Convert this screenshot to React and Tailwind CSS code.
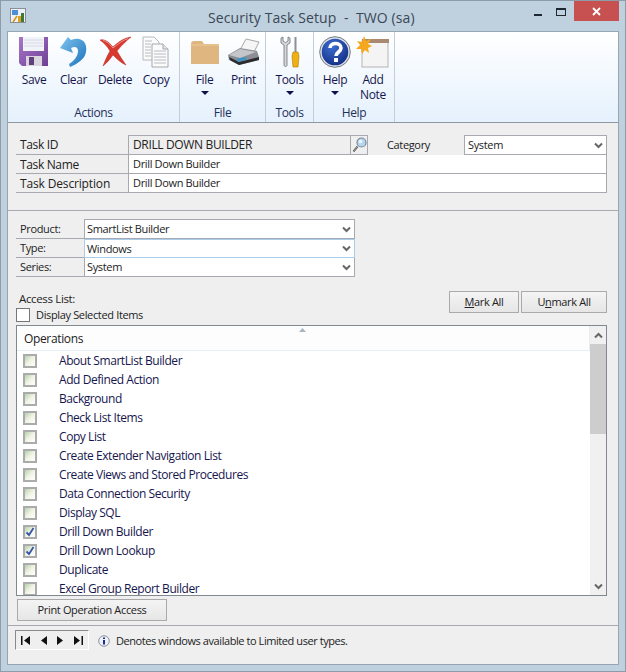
const ops = [
  ['About SmartList Builder', false],
  ['Add Defined Action', false],
  ['Background', false],
  ['Check List Items', false],
  ['Copy List', false],
  ['Create Extender Navigation List', false],
  ['Create Views and Stored Procedures', false],
  ['Data Connection Security', false],
  ['Display SQL', false],
  ['Drill Down Builder', true],
  ['Drill Down Lookup', true],
  ['Duplicate', false],
  ['Excel Group Report Builder', false],
]

const Caret = () => <div className="mx-auto mt-1 h-0 w-0 border-x-[4px] border-t-[4px] border-x-transparent border-t-[#10104a]" />

const Chevron = ({ up }) => (
  <svg width="9" height="7" viewBox="0 0 9 7" className={up ? 'rotate-180' : ''}>
    <path d="M1 1.500 L4.500 5 L8 1.500" fill="none" stroke="#666" strokeWidth="2" />
  </svg>
)

const SaveIcon = () => (
  <svg width="32" height="32" viewBox="0 0 32 32">
    <defs>
      <linearGradient id="sv" x1="0" y1="0" x2="1" y2="1">
        <stop offset="0" stopColor="#a678c8" />
        <stop offset="1" stopColor="#6f3f96" />
      </linearGradient>
    </defs>
    <path d="M1 1h29v29H4l-3-3z" fill="url(#sv)" />
    <rect x="5" y="1" width="21" height="14" fill="#f2f3f8" />
    <path d="M6 4h19M6 7h19M6 10h19" stroke="#d5d8e4" />
    <rect x="8" y="20" width="16" height="10" fill="#d9d6de" />
    <rect x="11" y="21" width="5" height="8" fill="#62407e" />
  </svg>
)

const ClearIcon = () => (
  <svg width="28" height="32" viewBox="0 0 28 32">
    <defs>
      <linearGradient id="cl" x1="0" y1="0" x2="1" y2="1">
        <stop offset="0" stopColor="#7fc4ee" />
        <stop offset="1" stopColor="#1a72bc" />
      </linearGradient>
    </defs>
    <path d="M11 4 C20 0 28 5 26 16 C25 23 17 28 10 31 L9 28 C14 25 18 20 18 15 C18 11 15 10 11 12 L13 17 L0 12 L8 1 Z" fill="url(#cl)" />
  </svg>
)

const DeleteIcon = () => (
  <svg width="32" height="32" viewBox="0 0 32 32">
    <path d="M1 4 C5 3 9 5 14 11 C19 6 25 2 32 1 C27 5 21 11 18 15 C21 20 24 25 27 29 C22 27 18 23 14 19 C11 23 8 27 4 30 C6 25 8 20 11 15 C8 10 5 7 1 4Z" fill="#d8392f" stroke="#b5271f" strokeWidth="0.5" />
    <path d="M4 4.500 C8 5 11 9 14 12 C19 8 24 4 29 2.500" fill="none" stroke="#f0908a" strokeWidth="1" />
  </svg>
)

const CopyIcon = () => (
  <svg width="28" height="32" viewBox="0 0 28 32">
    <path d="M1 1h11l5 5v18H1z" fill="#fbfbfb" stroke="#b4b8bc" />
    <path d="M10 8h11l5 5v18H10z" fill="#fbfbfb" stroke="#a4a8ac" />
    <path d="M3 5h7M3 8h6M3 11h6M3 14h6M3 17h6M3 20h6M12 15h12M12 18h12M12 21h12M12 24h12M12 27h12" stroke="#b8bcc2" />
    <path d="M21 8v5h5" fill="#e4e6e8" stroke="#a4a8ac" />
  </svg>
)

const FolderIcon = () => (
  <svg width="30" height="30" viewBox="0 0 30 30">
    <path d="M1 7c0-2 1-3 3-3h8l2 3h14c1 0 1 1 1 1v19H1z" fill="#dfb67f" />
    <path d="M1 8h28" stroke="#eccb9c" />
  </svg>
)

const PrintIcon = () => (
  <svg width="34" height="30" viewBox="0 0 34 30">
    <path d="M13 13 L19 2 L32 5 L27 15z" fill="#f6f6f6" stroke="#a8a8a8" />
    <path d="M1 18 L13 11 L30 14 L32 20 L32 23 L12 28 L2 23z" fill="#8b8e92" />
    <path d="M2 18 L13 12 L29 15 L13 21z" fill="#c4c6ca" />
    <path d="M3 23 L12 28 L32 23 L32 20 L12 25 L2 20z" fill="#2a2b2e" />
    <rect x="10" y="21" width="9" height="3" fill="#3b93c9" transform="rotate(-12 14 22)" />
  </svg>
)

const ToolsIcon = () => (
  <svg width="22" height="32" viewBox="0 0 22 32">
    <path d="M2 2 L2 7 L5 9 L5 29 C5 31 8 31 8 29 L8 9 L11 7 L11 2 L9 1 L9 5 L6.500 6.500 L4 5 L4 1z" fill="#d4d6d8" stroke="#6e7276" strokeWidth="0.8" />
    <rect x="15.500" y="1" width="2" height="15" fill="#8c9094" />
    <path d="M14 16h5l1 4-1 11h-5l-1-11z" fill="#f0b010" stroke="#a8780a" strokeWidth="0.6" />
  </svg>
)

const HelpIcon = () => (
  <svg width="32" height="32" viewBox="0 0 32 32">
    <defs>
      <radialGradient id="hp" cx="0.4" cy="0.3" r="0.8">
        <stop offset="0" stopColor="#3f6ed0" />
        <stop offset="1" stopColor="#0f2a80" />
      </radialGradient>
    </defs>
    <circle cx="16" cy="16" r="15.300" fill="#dde2e8" stroke="#737a84" />
    <circle cx="16" cy="16" r="13.300" fill="url(#hp)" />
    <path d="M11 12c0-6 11-6 11 0 0 4-5 4-5 8" fill="none" stroke="#fff" strokeWidth="3.600" />
    <rect x="15" y="22" width="4" height="4" fill="#fff" />
  </svg>
)

const NoteIcon = () => (
  <svg width="34" height="32" viewBox="0 0 34 32">
    <rect x="6" y="5" width="26" height="26" fill="#f4f4f4" stroke="#b4b4b4" />
    <rect x="6" y="3" width="27" height="4" fill="#a98a70" />
    <path d="M8 0 L10 5 L15 3 L12 8 L16 10 L12 12 L13 17 L9 14 L6 18 L5 13 L0 13 L4 9 L1 5 L6 6z" fill="#f5a81e" />
  </svg>
)

const ToolBtn = ({ icon, label, caret, w }) => (
  <div className={`flex flex-col items-center ${w}`}>
    <div className="flex h-[36px] items-center justify-center">{icon}</div>
    <div className="mt-[2px] text-center leading-[15px] text-[#16164e]">{label}</div>
    {caret && <Caret />}
  </div>
)

const Group = ({ title, w, pad, children }) => (
  <div className={`flex h-full flex-col border-r border-[#c4ced8] ${w}`}>
    <div className={`flex h-[72px] justify-center pt-[2px] ${pad || ''}`}>{children}</div>
    <div className="text-center leading-[18px] text-[#1f2f58]">{title}</div>
  </div>
)

const Row = ({ label, labelW, labelSize, h, children }) => (
  <div className={`flex ${h || 'h-[19px]'}`}>
    <div className={`flex items-center border-b border-[#a8a8b0] pl-[4px] pt-[1px] text-[#222] ${labelW} ${labelSize || ''}`}>{label}</div>
    {children}
  </div>
)

const DropRow = ({ label, value, focus, first }) => (
  <Row label={label} labelW="w-[68px]" labelSize="text-[11px]" h={first ? 'h-[20px]' : 'h-[19px]'}>
    <div className={`flex w-[271px] items-center justify-between border bg-white pl-[2px] pr-[3px] text-[11px] text-[#222] ${focus ? 'border-[#a9cdea]' : first ? 'border-[#a8a8b0]' : 'border-[#a8a8b0] border-t-0'}`}>
      <span className="pt-[1px]">{value}</span>
      <Chevron />
    </div>
  </Row>
)

const ListCheck = ({ on }) => (
  <div className="relative h-[14px] w-[14px] border-2 border-[#a9acaa] bg-gradient-to-br from-[#b8d0b0] via-[#f0f4e4] to-[#ffffff]">
    {on && (
      <svg width="10" height="10" viewBox="0 0 10 10" className="absolute left-0 top-0">
        <path d="M1.500 5.500 L4 8 L8.500 1" fill="none" stroke="#3358a8" strokeWidth="1.800" />
      </svg>
    )}
  </div>
)

const GrayBtn = ({ children, w }) => (
  <div className={`flex h-[22px] items-center justify-center border border-[#aaaaaa] bg-gradient-to-b from-[#f4f4f4] to-[#e6e6e6] text-[11px] text-[#222] ${w}`}>
    {children}
  </div>
)

export default function App() {
  return (
    <div className="flex h-[672px] w-[626px] flex-col border border-[#8e9ba8] bg-[#bfd1df] text-[12px] font-['Open_Sans',sans-serif] tracking-[-0.35px]">
      {/* title bar */}
      <div className="flex h-[30px] shrink-0 items-start">
        <div className="ml-[9px] mt-[6px]">
          <svg width="17" height="17" viewBox="0 0 17 17">
            <rect x="0.500" y="1.500" width="15" height="14" fill="#eef2f6" stroke="#8a8f96" />
            <rect x="2" y="3" width="6" height="5" fill="#4a90d8" />
            <rect x="11" y="6" width="3" height="9" fill="#3c7a3c" />
            <rect x="8" y="9" width="3" height="6" fill="#e0a020" />
            <path d="M3 15 L7 9" stroke="#d89018" strokeWidth="1.500" />
          </svg>
        </div>
        <div className="ml-[181px] mt-[6px] whitespace-pre text-[14px] tracking-[0.1px] text-[#3b4754]">Security Task Setup  -  TWO (sa)</div>
        <div className="flex-1" />
        <div className="mr-[14px] mt-[13px] h-[2px] w-[8px] bg-[#1f2730]" />
        <div className="mr-[8px] mt-[7px] h-[8px] w-[10px] border border-t-2 border-[#1f2730]" />
        <div className="mr-[6px] flex h-[20px] w-[45px] items-center justify-center bg-[#c75050]">
          <svg width="9" height="9" viewBox="0 0 9 9">
            <path d="M1 1 L8 8 M8 1 L1 8" stroke="#fff" strokeWidth="1.800" />
          </svg>
        </div>
      </div>

      {/* body */}
      <div className="mx-[6px] flex h-[634px] flex-col border border-[#98a6b2] bg-[#efefef]">
        {/* ribbon */}
        <div className="flex h-[91px] shrink-0 border-b border-[#8f98a2] bg-gradient-to-b from-white to-[#e5f1fd]">
          <Group title="Actions" w="w-[172px]" pad="pl-[3px]">
            <ToolBtn w="w-[39px]" icon={<SaveIcon />} label="Save" />
            <ToolBtn w="w-[40px]" icon={<ClearIcon />} label="Clear" />
            <ToolBtn w="w-[43px]" icon={<DeleteIcon />} label="Delete" />
            <ToolBtn w="w-[39px]" icon={<CopyIcon />} label="Copy" />
          </Group>
          <Group title="File" w="w-[86px]" pad="pl-[2px]">
            <ToolBtn w="w-[40px]" icon={<FolderIcon />} label="File" caret />
            <ToolBtn w="w-[38px]" icon={<PrintIcon />} label="Print" />
          </Group>
          <Group title="Tools" w="w-[48px]">
            <ToolBtn w="w-[44px]" icon={<ToolsIcon />} label="Tools" caret />
          </Group>
          <Group title="Help" w="w-[81px]">
            <ToolBtn w="w-[38px]" icon={<HelpIcon />} label="Help" caret />
            <ToolBtn w="w-[38px]" icon={<NoteIcon />} label={<>Add<br />Note</>} />
          </Group>
        </div>

        {/* task fields */}
        <div className="flex h-[88px] shrink-0 flex-col border-b border-[#a8a8b0] px-[8px] pt-[12px]">
          <Row label="Task ID" labelW="w-[112px]" h="h-[20px]">
            <div className="flex w-[240px] items-center justify-between border border-[#a8a8b0] bg-[#efefef] pl-[4px]">
              <span className="text-[#222]">DRILL DOWN BUILDER</span>
              <div className="flex h-full w-[17px] items-center justify-center border-l border-[#a8a8b0]">
                <svg width="15" height="16" viewBox="0 0 15 16">
                  <path d="M5.500 9.500 L1.500 14.500" stroke="#333" strokeWidth="2" />
                  <path d="M5.500 9.500 L1.500 14.500" stroke="#eee" strokeWidth="0.700" />
                  <circle cx="9.500" cy="5.500" r="4.500" fill="#b4d6f0" stroke="#7a8a98" strokeWidth="1.200" />
                  <circle cx="8.500" cy="4.500" r="1.800" fill="#eef6fc" />
                </svg>
              </div>
            </div>
            <div className="flex w-[96px] items-center pl-[19px] text-[11px] text-[#222]">Category</div>
            <div className="flex w-[143px] items-center justify-between border border-[#a8a8b0] bg-white pl-[3px] pr-[3px] text-[11px] text-[#222]">
              <span className="pt-[1px]">System</span>
              <Chevron />
            </div>
          </Row>
          <Row label="Task Name" labelW="w-[112px]">
            <div className="flex w-[479px] items-center border border-t-0 border-[#a8a8b0] bg-white pl-[4px] pt-[1px] text-[11px] text-[#222]">Drill Down Builder</div>
          </Row>
          <Row label="Task Description" labelW="w-[112px]" labelSize="tracking-[-0.15px]">
            <div className="flex w-[479px] items-center border border-t-0 border-[#a8a8b0] bg-white pl-[4px] pt-[1px] text-[11px] tracking-[-0.35px] text-[#222]">Drill Down Builder</div>
          </Row>
        </div>

        <div className="flex flex-1 flex-col px-[8px] pt-[8px]">
          {/* product selects */}
          <div className="flex flex-col">
            <DropRow label="Product:" value="SmartList Builder" first />
            <DropRow label="Type:" value="Windows" focus />
            <DropRow label="Series:" value="System" />
          </div>

          {/* access list header */}
          <div className="mt-[14px] flex h-[33px] justify-between">
            <div className="flex flex-col">
              <div className="pl-[3px] text-[11.500px] leading-[16px] text-[#222]">Access List:</div>
              <div className="flex items-center">
                <div className="h-[14px] w-[14px] border border-[#777] bg-white" />
                <span className="ml-[6px] text-[11px] text-[#222]">Display Selected Items</span>
              </div>
            </div>
            <div className="mr-[3px] flex gap-[2px]">
              <GrayBtn w="w-[70px]"><span><u>M</u>ark All</span></GrayBtn>
              <GrayBtn w="w-[86px]"><span>U<u>n</u>mark All</span></GrayBtn>
            </div>
          </div>

          {/* operations list */}
          <div className="mt-[1px] flex h-[271px] w-[591px] border border-[#808890] bg-white">
            <div className="relative flex min-w-0 flex-1 flex-col overflow-hidden">
              <div className="flex h-[25px] shrink-0 items-center border-b border-r border-[#e6edf5] bg-[#fdfdfd] pl-[7px] pt-[1px] text-[#222]">Operations</div>
              <div className="absolute left-[282px] top-[2px]">
                <svg width="7" height="4" viewBox="0 0 7 4"><path d="M0 4 L3.500 0 L7 4z" fill="#aab4c0" /></svg>
              </div>
              {ops.map(([name, on]) => (
                <div key={name} className="flex h-[19px] shrink-0 items-center pl-[6px] pt-[1px] tracking-[-0.43px] text-[#16164e]">
                  <ListCheck on={on} />
                  <span className="ml-[22px]">{name}</span>
                </div>
              ))}
            </div>
            <div className="flex w-[16px] shrink-0 flex-col items-center bg-[#f0f0f0]">
              <div className="flex h-[18px] items-center"><Chevron up /></div>
              <div className="h-[90px] w-full bg-[#cdcdcd]" />
              <div className="flex-1" />
              <div className="flex h-[18px] items-center"><Chevron /></div>
            </div>
          </div>

          <div className="ml-[1px] mt-[3px]">
            <GrayBtn w="w-[150px]">Print Operation Access</GrayBtn>
          </div>
        </div>

        {/* footer */}
        <div className="flex h-[39px] shrink-0 items-start border-t border-[#a8a8b0] pl-[7px] pt-[4px]">
          <div className="flex h-[20px] w-[74px] items-center justify-between border border-b-white border-l-[#8a8a8a] border-r-white border-t-[#8a8a8a] px-[5px]">
            <svg width="9" height="9" viewBox="0 0 9 9"><path d="M0 0h1.500v9H0zM9 0v9L3 4.500z" fill="#111" /></svg>
            <svg width="6" height="9" viewBox="0 0 6 9"><path d="M6 0v9L0 4.500z" fill="#111" /></svg>
            <svg width="6" height="9" viewBox="0 0 6 9"><path d="M0 0v9l6-4.500z" fill="#111" /></svg>
            <svg width="9" height="9" viewBox="0 0 9 9"><path d="M0 0v9l6-4.500zM7.500 0H9v9H7.500z" fill="#111" /></svg>
          </div>
          <div className="ml-[9px] mt-[1px] flex h-[20px] items-center text-[11px] tracking-[-0.43px] text-[#222]">
            <svg width="12" height="12" viewBox="0 0 12 12" className="mr-[6px]">
              <circle cx="6" cy="6" r="5.300" fill="#eef2f8" stroke="#8a92a0" />
              <rect x="5" y="5" width="2" height="4.500" fill="#1c2f8c" />
              <rect x="5" y="2.500" width="2" height="1.500" fill="#1c2f8c" />
            </svg>
            Denotes windows available to Limited user types.
          </div>
        </div>
      </div>
    </div>
  )
}
